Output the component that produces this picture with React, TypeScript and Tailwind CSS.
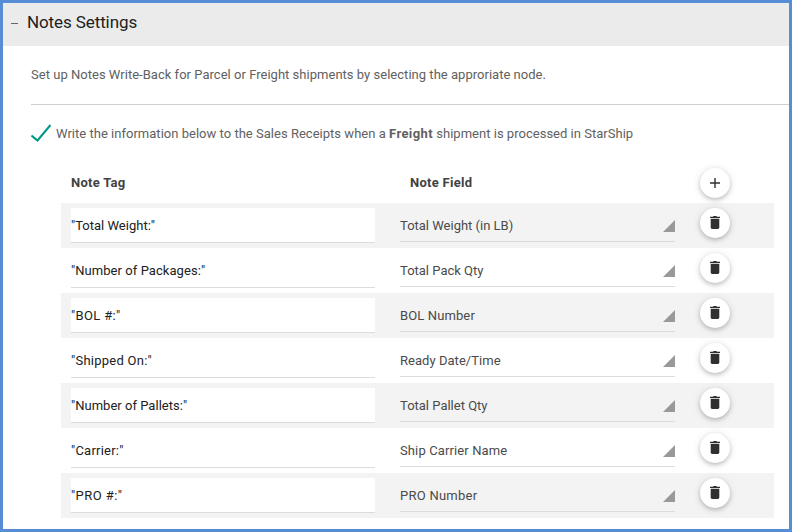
const rows = [
  ['"Total Weight:"', 'Total Weight (in LB)', 'tracking-[0.01px]', 'tracking-[0px]'],
  ['"Number of Packages:"', 'Total Pack Qty', 'tracking-[0.06px]', 'tracking-[0px]'],
  ['"BOL #:"', 'BOL Number', 'tracking-[0.35px]', 'tracking-[0.12px]'],
  ['"Shipped On:"', 'Ready Date/Time', 'tracking-[0.25px]', 'tracking-[0.04px]'],
  ['"Number of Pallets:"', 'Total Pallet Qty', 'tracking-[0.02px]', 'tracking-[0px]'],
  ['"Carrier:"', 'Ship Carrier Name', 'tracking-[0.23px]', 'tracking-[0.12px]'],
  ['"PRO #:"', 'PRO Number', 'tracking-[0.45px]', 'tracking-[0.25px]'],
];

const round =
  "flex h-[30px] w-[30px] items-center justify-center rounded-full bg-white text-[#303030] shadow-[0_2px_4px_rgba(0,0,0,0.2),0_1px_10px_rgba(0,0,0,0.1)]";

function TrashIcon() {
  return (
    <svg className="-mt-px" width="10" height="13" viewBox="0 0 10 13" fill="currentColor">
      <path d="M0 .7h3L3.6 0h2.8l.6.7h3V2H0zM.7 2.8h8.6v8.8c0 .8-.6 1.4-1.4 1.4H2.1C1.3 13 .7 12.4.7 11.6z" />
    </svg>
  );
}

export default function App() {
  return (
    <div className="h-[532px] w-[792px] overflow-hidden border-[3px] border-[#568dd4] bg-white font-[Roboto,sans-serif] text-[13px] text-[#616161]">
      <header className="flex h-[43px] items-center bg-[#ebebeb] pl-2 text-[#212121]">
        <span className="-mt-[2px] h-px w-[7px] bg-[#666]" />
        <h1 className="ml-[9px] -mt-1 text-[17px] tracking-[-0.1px]">Notes Settings</h1>
      </header>
      <main className="pl-7">
        <p className="h-[59px] border-b border-[#cfcfcf] pt-[19px] leading-5 tracking-[0.024px]">
          Set up Notes Write-Back for Parcel or Freight shipments by selecting the approriate node.
        </p>
        <div className="flex h-[58px] items-center">
          <svg className="h-5 w-5" viewBox="0 0 20 20" fill="none" stroke="#009688" strokeWidth="2">
            <path d="M.5 11.5l6 5L19.500 1" />
          </svg>
          <span className="ml-[5px] tracking-[0.02px]">
            Write the information below to the Sales Receipts when a <b className="tracking-[0.4px]">Freight</b> shipment is processed in StarShip
          </span>
        </div>
        <section className="ml-[30px] w-[713px]">
          <div className="flex h-10 items-center font-bold tracking-[0.27px] text-[#424242]">
            <span className="ml-[10px] w-[339px]">Note Tag</span>
            <span className="w-[290px]">Note Field</span>
            <button className={round}>
              <svg width="16" height="16" viewBox="0 0 16 16" stroke="currentColor" strokeWidth="1.4">
                <path d="M8 3v10M3 8h10" />
              </svg>
            </button>
          </div>
          {rows.map(([tag, field, tagTracking, fieldTracking], i) => (
            <div key={tag} className={`flex h-[45px] items-start pl-[10px] pt-[5px] ${i % 2 === 0 ? "bg-[#f3f3f3]" : "bg-white"}`}>
              <div className={`h-[35px] w-[304px] border-b border-[#dcdcdc] bg-white leading-[35px] text-[#212121] ${tagTracking}`}>{tag}</div>
              <div className="ml-[25px] flex h-[34px] w-[275px] items-center justify-between border-b border-[#dcdcdc] pt-[2px] text-[#4a4a4a]">
                <span className={fieldTracking}>{field}</span>
                <svg width="12" height="12" viewBox="0 0 12 12" fill="#999999">
                  <path d="M12 0v12H0z" />
                </svg>
              </div>
              <button className={`ml-[25px] ${round}`}>
                <TrashIcon />
              </button>
            </div>
          ))}
        </section>
      </main>
    </div>
  );
}
